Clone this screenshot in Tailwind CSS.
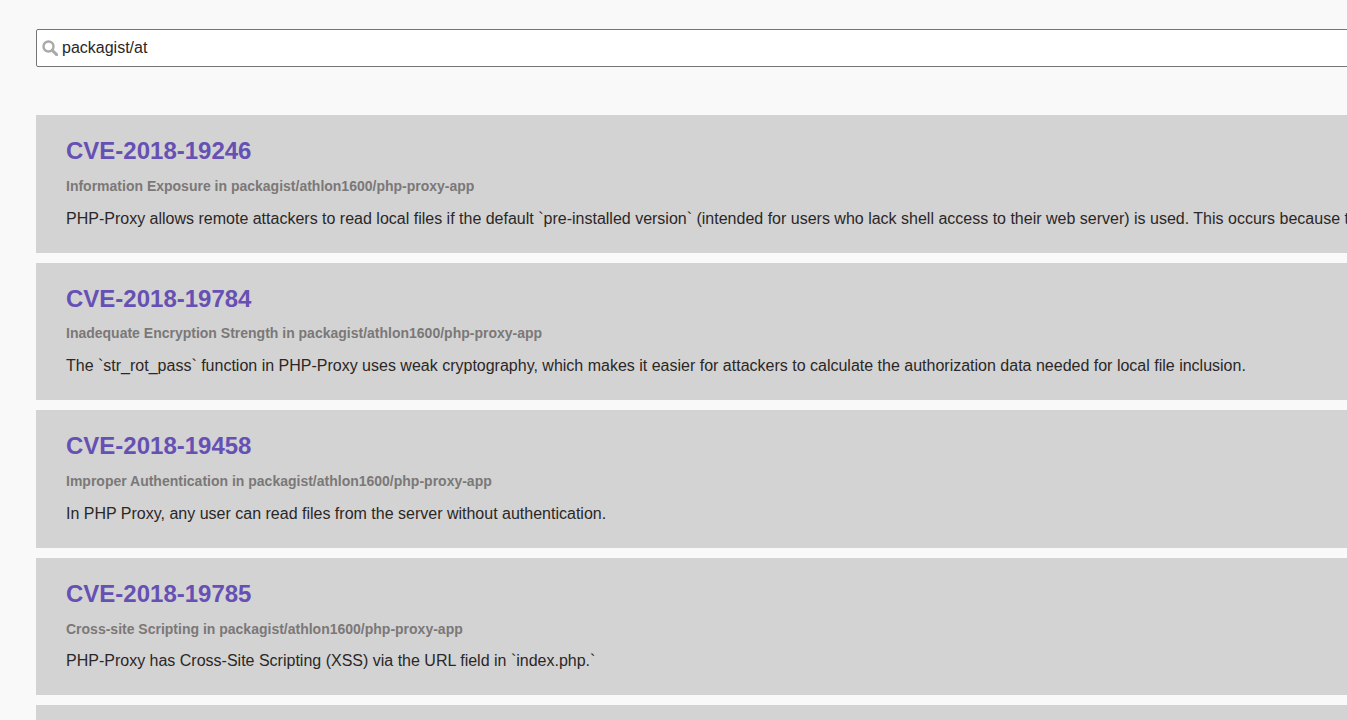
<!DOCTYPE html>
<html lang="en">
<head>
  <meta charset="UTF-8">
  <title>Vulnerability search</title>
  <script src="https://cdn.jsdelivr.net/npm/@tailwindcss/browser@4"></script>
</head>
<body class="bg-[#f9f9f9] h-[720px] overflow-hidden font-['Liberation_Sans',Arial,sans-serif] text-[#2b2727]">
  <div class="w-[1500px] pl-9 pt-[29px]">
    <!-- search -->
    <div class="flex items-center h-[38px] bg-white border border-[#767676] rounded-[2px] pl-[5px] mb-12">
      <svg class="w-4 h-4 text-[#a9a9a9] shrink-0" viewBox="0 0 16 16" fill="none" stroke="currentColor">
        <circle cx="6.5" cy="6.5" r="5" stroke-width="2.4"></circle>
        <path d="M10.2 10.2L14.6 14.6" stroke-width="3" stroke-linecap="round"></path>
      </svg>
      <input type="text" value="packagist/at" class="ml-1 flex-1 text-base outline-none text-[#2b2727]">
    </div>

    <!-- results -->
    <div class="flex flex-col gap-2.5">
      <div class="bg-[#d3d3d3] h-[137.6px] pl-[30px] pt-[19px] whitespace-nowrap">
        <h2 class="text-2xl leading-[33px] font-bold text-[#6650b3]">CVE-2018-19246</h2>
        <h3 class="mt-[10.8px] text-sm leading-[16px] font-bold text-[#7b7878]">Information Exposure in packagist/athlon1600/php-proxy-app</h3>
        <p class="mt-[15.8px] text-base leading-[18px]">PHP-Proxy allows remote attackers to read local files if the default `pre-installed version` (intended for users who lack shell access to their web server) is used. This occurs because the default configuration is insecure.</p>
      </div>
      <div class="bg-[#d3d3d3] h-[137.6px] pl-[30px] pt-[19px] whitespace-nowrap">
        <h2 class="text-2xl leading-[33px] font-bold text-[#6650b3]">CVE-2018-19784</h2>
        <h3 class="mt-[10.8px] text-sm leading-[16px] font-bold text-[#7b7878]">Inadequate Encryption Strength in packagist/athlon1600/php-proxy-app</h3>
        <p class="mt-[15.8px] text-base leading-[18px]">The `str_rot_pass` function in PHP-Proxy uses weak cryptography, which makes it easier for attackers to calculate the authorization data needed for local file inclusion.</p>
      </div>
      <div class="bg-[#d3d3d3] h-[137.6px] pl-[30px] pt-[19px] whitespace-nowrap">
        <h2 class="text-2xl leading-[33px] font-bold text-[#6650b3]">CVE-2018-19458</h2>
        <h3 class="mt-[10.8px] text-sm leading-[16px] font-bold text-[#7b7878]">Improper Authentication in packagist/athlon1600/php-proxy-app</h3>
        <p class="mt-[15.8px] text-base leading-[18px]">In PHP Proxy, any user can read files from the server without authentication.</p>
      </div>
      <div class="bg-[#d3d3d3] h-[137.6px] pl-[30px] pt-[19px] whitespace-nowrap">
        <h2 class="text-2xl leading-[33px] font-bold text-[#6650b3]">CVE-2018-19785</h2>
        <h3 class="mt-[10.8px] text-sm leading-[16px] font-bold text-[#7b7878]">Cross-site Scripting in packagist/athlon1600/php-proxy-app</h3>
        <p class="mt-[15.8px] text-base leading-[18px]">PHP-Proxy has Cross-Site Scripting (XSS) via the URL field in `index.php.`</p>
      </div>
      <div class="bg-[#d3d3d3] h-[137.6px]"></div>
    </div>
  </div>
</body>
</html>
